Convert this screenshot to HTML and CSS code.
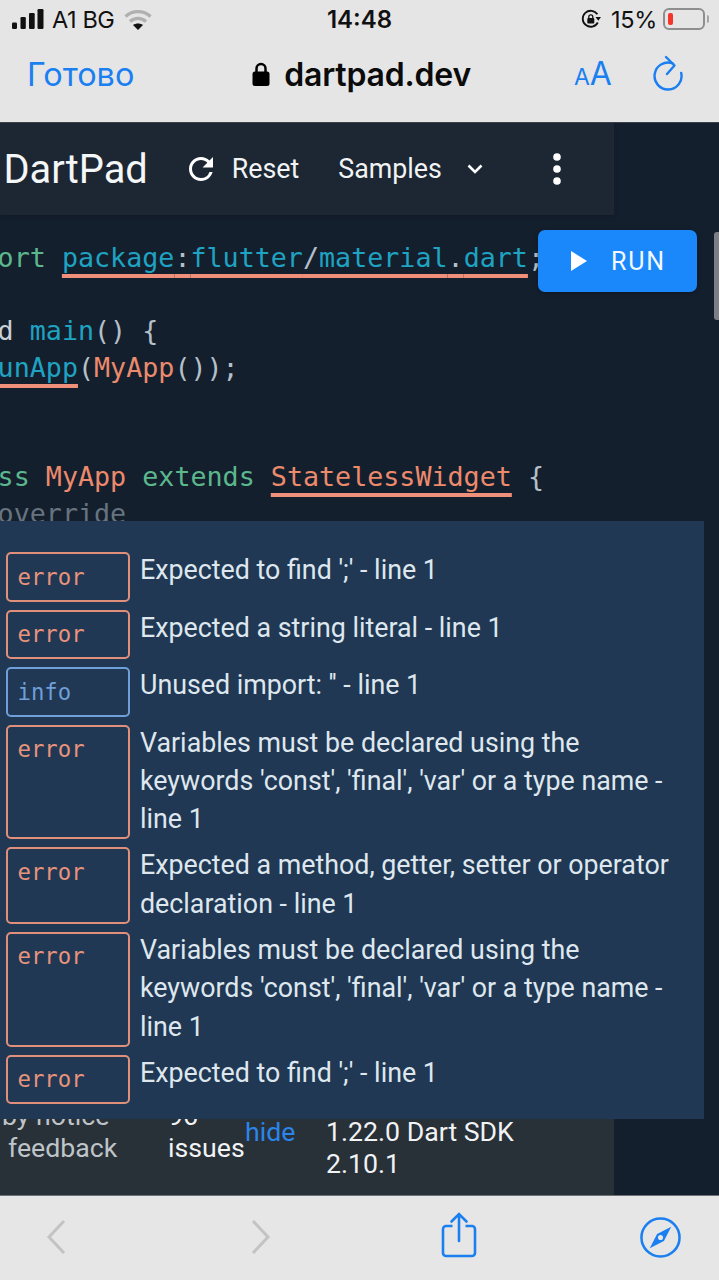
FILE: index.html
```html
<!DOCTYPE html>
<html lang="en">
<head>
<meta charset="utf-8">
<title>DartPad</title>
<link rel="stylesheet" href="styles.css">
</head>
<body>
<div class="phone">
  <div class="chrome-top">
    <div class="status">
      <div class="status-left">
        <svg class="signal" viewBox="0 0 32 20"><rect x="0" y="13.500" width="5" height="6.500" rx="1.200"/><rect x="8.500" y="8" width="5.300" height="12" rx="1.200"/><rect x="17" y="4" width="5.700" height="16" rx="1.200"/><rect x="25.500" y="0" width="6" height="20" rx="1.200"/></svg>
        <span class="carrier">A1 BG</span>
        <svg class="wifi" viewBox="0 0 28 21"><path d="M1.500 7.500C8.500 1 19.500 1 26.500 7.500" fill="none" stroke="#b0b0b0" stroke-width="3.400"/><path d="M6 12.500c4.600-4.200 11.400-4.200 16 0" fill="none" stroke="#b0b0b0" stroke-width="3.400"/><path d="M14 21l-5-5c3-2 7-2 10 0z" fill="#111"/></svg>
      </div>
      <div class="time">14:48</div>
      <div class="status-right">
        <svg class="rotlock" viewBox="0 0 20 20"><path d="M16.800 13.500A8 8 0 1 1 16.400 5.300" fill="none" stroke="#111" stroke-width="1.800"/><path d="M14.500 8h5.500l-2.700 3.800z" fill="#111"/><rect x="6.300" y="9" width="7" height="5.500" rx="1" fill="#111"/><path d="M7.800 9.500V7.800a2 2 0 0 1 4 0V9.500" fill="none" stroke="#111" stroke-width="1.300"/></svg>
        <span class="battery-pct">15%</span>
        <div class="battery"><div class="battery-level"></div></div>
        <div class="battery-cap"></div>
      </div>
    </div>
    <div class="urlbar">
      <span class="done">Готово</span>
      <div class="address">
        <svg class="lock" viewBox="0 0 18 26"><path d="M4.500 12V7.500a4.500 4.500 0 0 1 9 0V12" fill="none" stroke="#000" stroke-width="2.500"/><rect x="0.500" y="10.500" width="17" height="14.500" rx="2.500" fill="#000"/></svg>
        <span class="domain">dartpad.dev</span>
      </div>
      <span class="aa"><span class="aa-small">A</span>A</span>
      <svg class="reload" viewBox="0 0 30 36"><path d="M20 8.500A13.500 13.500 0 1 0 28.200 18" fill="none" stroke="#1a7ff0" stroke-width="2.400" stroke-linecap="round"/><path d="M13 2l8.500 8.500L14 19" fill="none" stroke="#1a7ff0" stroke-width="2.400" stroke-linecap="round" stroke-linejoin="round"/></svg>
    </div>
  </div>

  <main class="main">
    <header class="toolbar">
      <span class="brand">DartPad</span>
      <svg class="reset-icon" viewBox="4 4 16 16"><path d="M17.650 6.350A7.958 7.958 0 0 0 12 4c-4.420 0-7.990 3.580-7.990 8s3.570 8 7.990 8c3.730 0 6.840-2.550 7.730-6h-2.080A5.990 5.990 0 0 1 12 18c-3.310 0-6-2.690-6-6s2.690-6 6-6c1.660 0 3.140.69 4.220 1.780L13 11h7V4l-2.350 2.350z" fill="#fff"/></svg>
      <span class="tool reset-label">Reset</span>
      <span class="tool samples-label">Samples</span>
      <svg class="chevron" viewBox="0 0 16 10"><path d="M1.500 1.500L8 8l6.500-6.500" fill="none" stroke="#fff" stroke-width="2.600"/></svg>
      <svg class="dots" viewBox="0 0 8 32"><circle cx="4" cy="4" r="3.800" fill="#fff"/><circle cx="4" cy="16" r="3.800" fill="#fff"/><circle cx="4" cy="28" r="3.800" fill="#fff"/></svg>
    </header>

    <div class="code">
      <div class="line"><span class="kw">ort</span> <span class="err"><span class="fn">package</span><span class="pn">:</span><span class="fn">flutter</span><span class="pn">/</span><span class="fn">material</span><span class="pn">.</span><span class="fn">dart</span></span><span class="pn">;</span></div>
      <div class="line">&nbsp;</div>
      <div class="line"><span class="pl">d</span> <span class="fn">main</span><span class="pn">() {</span></div>
      <div class="line"><span class="err"><span class="fn">unApp</span></span><span class="pn">(</span><span class="cls">MyApp</span><span class="pn">());</span></div>
      <div class="line">&nbsp;</div>
      <div class="line">&nbsp;</div>
      <div class="line"><span class="kw">ss</span> <span class="cls">MyApp</span> <span class="kw">extends</span> <span class="err"><span class="cls">StatelessWidget</span></span> <span class="pn">{</span></div>
      <div class="line"><span class="meta">override</span></div>
    </div>

    <footer class="footer">
      <div class="foot-col col-notice"><span class="foot-clip">by notice</span><span>feedback</span></div>
      <div class="foot-col col-issues"><span>96</span><span>issues</span></div>
      <div class="foot-col col-hide"><span class="hide-link">hide</span></div>
      <div class="foot-col col-version"><span>1.22.0 Dart SDK</span><span>2.10.1</span></div>
    </footer>

    <button class="run"><svg class="play" viewBox="0 0 16 20"><path d="M0 0l16 10L0 20z" fill="#fff"/></svg><span>RUN</span></button>
    <div class="scrollbar"></div>

    <section class="issues">
      <div class="issue"><span class="badge error">error</span><p class="msg">Expected to find ';' - line 1</p></div>
      <div class="issue"><span class="badge error">error</span><p class="msg">Expected a string literal - line 1</p></div>
      <div class="issue"><span class="badge info">info</span><p class="msg">Unused import: '' - line 1</p></div>
      <div class="issue"><span class="badge error">error</span><p class="msg">Variables must be declared using the keywords 'const', 'final', 'var' or a type name - line 1</p></div>
      <div class="issue"><span class="badge error">error</span><p class="msg">Expected a method, getter, setter or operator declaration - line 1</p></div>
      <div class="issue"><span class="badge error">error</span><p class="msg">Variables must be declared using the keywords 'const', 'final', 'var' or a type name - line 1</p></div>
      <div class="issue"><span class="badge error">error</span><p class="msg">Expected to find ';' - line 1</p></div>
    </section>
  </main>

  <nav class="chrome-bottom">
    <svg class="nav-back" viewBox="0 0 20 36"><path d="M18 2L3 18l15 16" fill="none" stroke="#c3c3c3" stroke-width="3"/></svg>
    <svg class="nav-forward" viewBox="0 0 20 36"><path d="M2 2l15 16L2 34" fill="none" stroke="#c3c3c3" stroke-width="3"/></svg>
    <svg class="nav-share" viewBox="0 0 36 46"><path d="M11.500 14H5a3 3 0 0 0-3 3v24a3 3 0 0 0 3 3h26a3 3 0 0 0 3-3V17a3 3 0 0 0-3-3h-6.500" fill="none" stroke="#1a7ff0" stroke-width="2.600"/><path d="M18 29V3M10.500 9.500L18 2l7.500 7.500" fill="none" stroke="#1a7ff0" stroke-width="2.600" stroke-linecap="round"/></svg>
    <svg class="nav-compass" viewBox="0 0 42 42"><circle cx="21" cy="21" r="19.500" fill="none" stroke="#1a7ff0" stroke-width="2.600"/><path d="M32 10L24.500 24.500 10 32 17.500 17.500z" fill="#1a7ff0"/><circle cx="21" cy="21" r="2.600" fill="#e6e6e6"/></svg>
  </nav>
</div>
</body>
</html>
```
FILE: styles.css
```css
* { box-sizing: border-box; }
html, body { margin: 0; padding: 0; }
body { background: #141f2e; font-family: Roboto, "Noto Sans", sans-serif; }
svg { display: block; flex: none; }

.phone { width: 719px; height: 1280px; display: flex; flex-direction: column; overflow: hidden; }

.chrome-top { height: 123px; flex: none; background: #e5e5e5; border-bottom: 1px solid #3b4148; font-family: Inter, "Noto Sans", sans-serif; }
.status { height: 38px; display: grid; grid-template-columns: 1fr auto 1fr; align-items: center; color: #111; }
.status-left { display: flex; align-items: center; padding-left: 12px; }
.signal { width: 32px; height: 20px; fill: #111; }
.carrier { font-size: 23.500px; margin-left: 8px; letter-spacing: -0.4px; }
.wifi { width: 28px; height: 21px; margin-left: 9px; }
.time { font-size: 24px; font-weight: 600; }
.status-right { display: flex; align-items: center; justify-content: flex-end; padding-right: 10px; }
.rotlock { width: 20px; height: 20px; }
.battery-pct { font-size: 23.500px; margin-left: 10px; letter-spacing: -0.3px; }
.battery { width: 42px; height: 22px; margin-left: 6px; border: 2px solid #8e8e8e; border-radius: 6px; padding: 3px; }
.battery-level { width: 5px; height: 100%; background: #f5352b; border-radius: 2px; }
.battery-cap { width: 2px; height: 8px; margin-left: 2px; background: #a5a5a5; border-radius: 0 2px 2px 0; }

.urlbar { height: 74px; display: flex; align-items: center; padding-bottom: 2px; }
.done { font-size: 32.400px; color: #1a7ff0; margin-left: 27px; }
.address { display: flex; align-items: center; margin-left: 118px; }
.lock { width: 18px; height: 26px; }
.domain { font-size: 32px; font-weight: 600; color: #0b0b0b; margin-left: 14px; letter-spacing: -0.2px; }
.aa { font-size: 32px; color: #1a7ff0; margin-left: 103px; line-height: 1; }
.aa-small { font-size: 23px; margin-right: 0; }
.reload { width: 30px; height: 36px; margin-left: 41px; margin-top: -3px; }

.main { position: relative; flex: 1; min-height: 0; display: flex; flex-direction: column; background: #141f2e; overflow: hidden; }

.toolbar { width: 614px; height: 92px; flex: none; display: flex; align-items: center; background: #1c2733; color: #fff; box-shadow: 0 2px 4px rgba(0,0,0,.18); }
.brand { font-size: 39.800px; margin-left: 3.500px; color: #f4f6f7; }
.reset-icon { width: 24px; height: 24px; margin-left: 41px; }
.tool { font-size: 26.800px; color: #f1f3f4; }
.reset-label { margin-left: 19px; }
.samples-label { margin-left: 39px; }
.chevron { width: 16px; height: 10px; margin-left: 25px; }
.dots { width: 8px; height: 32px; margin-left: 70px; }

.code { flex: 1; padding-top: 25px; margin-left: -2.400px; font-family: "DejaVu Sans Mono", "Liberation Mono", monospace; font-size: 26.700px; }
.line { height: 36.500px; line-height: 36.500px; white-space: pre; }
.kw { color: #5cb88c; }
.fn { color: #1fa3c2; }
.pn { color: #b4c0c8; }
.pl { color: #c9d1d6; }
.cls { color: #ec8a6c; }
.meta { color: #66747f; }
.err { text-decoration: underline 3.500px #f0907a; text-decoration-skip-ink: none; text-underline-offset: 7px; }

.footer { width: 614px; height: 96px; flex: none; display: flex; align-items: flex-start; padding-top: 1px; background: #283038; color: #f1f3f4; font-size: 26.700px; line-height: 32px; }
.foot-col { display: flex; flex-direction: column; flex: none; }
.col-notice { width: 168px; padding-left: 8px; color: #bfc4c8; }
.foot-clip { margin-left: -6px; }
.col-issues { width: 77px; }
.col-hide { width: 81px; margin-top: 16px; }
.col-version { margin-top: 16px; }
.hide-link { color: #2a86e8; }

.run { position: absolute; left: 538px; top: 107px; width: 159px; height: 62px; display: flex; align-items: center; padding: 0 0 0 33px; border: 0; border-radius: 7px; background: #1a88fb; color: #f3f8ff; font-family: Roboto, sans-serif; font-size: 25px; letter-spacing: 1.800px; box-shadow: 0 1px 4px rgba(0,0,0,.3); }
.play { width: 16px; height: 20px; }
.run span { margin-left: 24px; }
.scrollbar { position: absolute; left: 714px; top: 109px; width: 6px; height: 88px; background: #7c8085; border-radius: 3px 0 0 3px; }

.issues { position: absolute; left: 0; top: 398px; width: 704px; height: 598px; background: #203854; padding: 31px 0 0 6px; display: flex; flex-direction: column; gap: 8px; }
.issue { display: flex; align-items: stretch; }
.badge { width: 124px; min-height: 49.500px; flex: none; border: 2px solid; border-radius: 5px; padding: 9.500px 0 0 9.500px; font-family: "DejaVu Sans Mono", "Liberation Mono", monospace; font-size: 22.300px; line-height: 26px; }
.badge.error { color: #e8937c; border-color: #e0907a; }
.badge.info { color: #6f9fd8; border-color: #6f9fd8; }
.msg { margin: -1px 0 1px 10px; width: 535px; font-size: 26.800px; line-height: 38.300px; color: #dfe7ee; }

.chrome-bottom { height: 85px; flex: none; display: flex; align-items: center; background: #e6e6e6; border-top: 1px solid #6d7278; padding-bottom: 2px; }
.nav-back { width: 20px; height: 36px; margin-left: 46px; }
.nav-forward { width: 20px; height: 36px; margin-left: 185px; }
.nav-share { width: 36px; height: 46px; margin-left: 170px; margin-top: -4px; }
.nav-compass { width: 41px; height: 41px; margin-left: 163px; }
```
